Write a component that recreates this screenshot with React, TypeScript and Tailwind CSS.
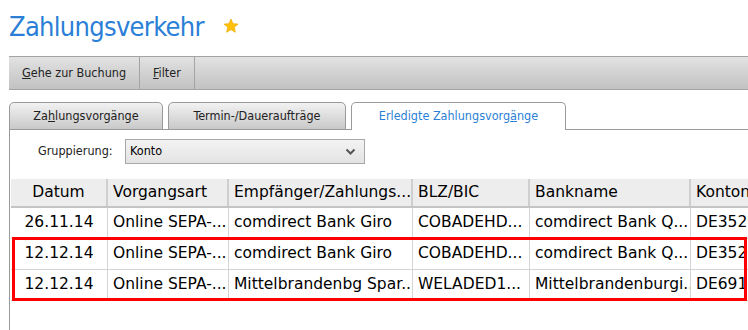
const cols = [
  { w: "w-[97px]", align: "justify-center" },
  { w: "w-[121px]", align: "" },
  { w: "w-[184px]", align: "" },
  { w: "w-[117px]", align: "" },
  { w: "w-[161px]", align: "" },
  { w: "w-[120px]", align: "" },
];

const head = ["Datum", "Vorgangsart", "Empfänger/Zahlungs...", "BLZ/BIC", "Bankname", "Kontonummer"];

const rows = [
  ["26.11.14", "Online SEPA-...", "comdirect Bank Giro", "COBADEHD...", "comdirect Bank Q...", "DE35200411"],
  ["12.12.14", "Online SEPA-...", "comdirect Bank Giro", "COBADEHD...", "comdirect Bank Q...", "DE35200411"],
  ["12.12.14", "Online SEPA-...", "Mittelbrandenbg Spar...", "WELADED1...", "Mittelbrandenburgi...", "DE69160500"],
];

const Row = ({ cells }: { cells: string[] }) => {
  return (
    <div className="flex h-[31px] border-b border-[#d4d4d4]">
      {cells.map((c, i) => (
        <div
          key={i}
          className={`${cols[i].w} ${cols[i].align} flex items-center shrink-0 px-[5px] border-r border-[#d4d4d4] whitespace-nowrap overflow-hidden`}
        >
          {c}
        </div>
      ))}
    </div>
  );
};

const App = () => {
  return (
    <div className="w-[748px] h-[330px] overflow-hidden bg-white font-['DejaVu_Sans',sans-serif] text-black">
      {/* title */}
      <div className="h-[56px] flex items-start pl-[9px] pt-[10px] gap-[19px]">
        <span className="text-[27px] leading-[34px] text-[#2b7fd6] font-stretch-semi-condensed tracking-[-0.7px]">Zahlungsverkehr</span>
        <svg width="16" height="16" viewBox="0 0 24 24" className="mt-[8px]">
          <path d="M12 1.5l3.1 7 7.4.6-5.6 4.9 1.7 7.4L12 17.5l-6.6 3.9 1.7-7.4L1.5 9.1l7.4-.6z" fill="#ffc107" stroke="#f0a800" strokeWidth="1" />
        </svg>
      </div>

      {/* toolbar */}
      <div className="ml-[9px] h-[34px] flex border-y border-[#a4a4a4] bg-gradient-to-b from-[#e2e2e2] to-[#c2c2c2] text-[12.5px] text-[#222] font-stretch-semi-condensed">
        <div className="flex items-center px-[13px] border-r border-[#a4a4a4]">
          <span><span className="underline">G</span>ehe zur Buchung</span>
        </div>
        <div className="flex items-center px-[13px] border-r border-[#a4a4a4]">
          <span><span className="underline">F</span>ilter</span>
        </div>
      </div>

      {/* tabs */}
      <div className="ml-[9px] mt-[12px] h-[28px] flex items-end gap-[5px] border-b border-[#9a9a9a] text-[12.5px] font-stretch-semi-condensed">
        <div className="w-[154px] h-[28px] -mb-px flex items-center justify-center rounded-t-[5px] border border-[#9a9a9a] bg-gradient-to-b from-[#f2f2f2] to-[#c9c9c9] text-[#222]">
          <span>Za<span className="underline">h</span>lungsvorgänge</span>
        </div>
        <div className="w-[178px] h-[28px] -mb-px flex items-center justify-center rounded-t-[5px] border border-[#9a9a9a] bg-gradient-to-b from-[#f2f2f2] to-[#c9c9c9] text-[#222]">
          <span>Termin-/Daueraufträge</span>
        </div>
        <div className="w-[215px] h-[28px] -mb-px flex items-center justify-center rounded-t-[5px] border border-b-0 border-[#9a9a9a] bg-white text-[#2b7fd6]">
          <span>Erledigte Zahlungsvorg<span className="underline">ä</span>nge</span>
        </div>
      </div>

      {/* panel */}
      <div className="ml-[9px] border-l border-[#9a9a9a] h-[200px] pl-[1px]">
        <div className="flex items-center pt-[9px] h-[34px] font-stretch-semi-condensed">
          <span className="w-[114px] pl-[27px] text-[12.5px] text-[#222]">Gruppierung:</span>
          <div className="w-[240px] h-[25px] flex items-center justify-between border border-[#a8a8a8] bg-gradient-to-b from-[#f3f3f3] to-[#e3e3e3] pl-[4px] pr-[8px] text-[12.5px]">
            <span>Konto</span>
            <svg width="11" height="8" viewBox="0 0 11 8">
              <path d="M1.5 1.5l4 4 4-4" fill="none" stroke="#555" strokeWidth="2" />
            </svg>
          </div>
        </div>

        <div className="mt-[15px] w-[800px] text-[15.5px]">
          <div className="flex h-[29px] bg-[#ededed] border-b-2 border-[#c4c4c4]">
            {head.map((h, i) => (
              <div
                key={i}
                className={`${cols[i].w} ${cols[i].align} flex items-center shrink-0 px-[5px] border-r-2 border-[#cfcfcf] whitespace-nowrap overflow-hidden`}
              >
                {h}
              </div>
            ))}
          </div>
          <Row cells={rows[0]} />
          <div className="relative">
            <Row cells={rows[1]} />
            <Row cells={rows[2]} />
            <div className="absolute pointer-events-none left-[1px] top-[-2px] w-[735px] h-[64px] border-[3px] border-[#ff0000]" />
          </div>
        </div>
      </div>
    </div>
  );
};

export default App;
